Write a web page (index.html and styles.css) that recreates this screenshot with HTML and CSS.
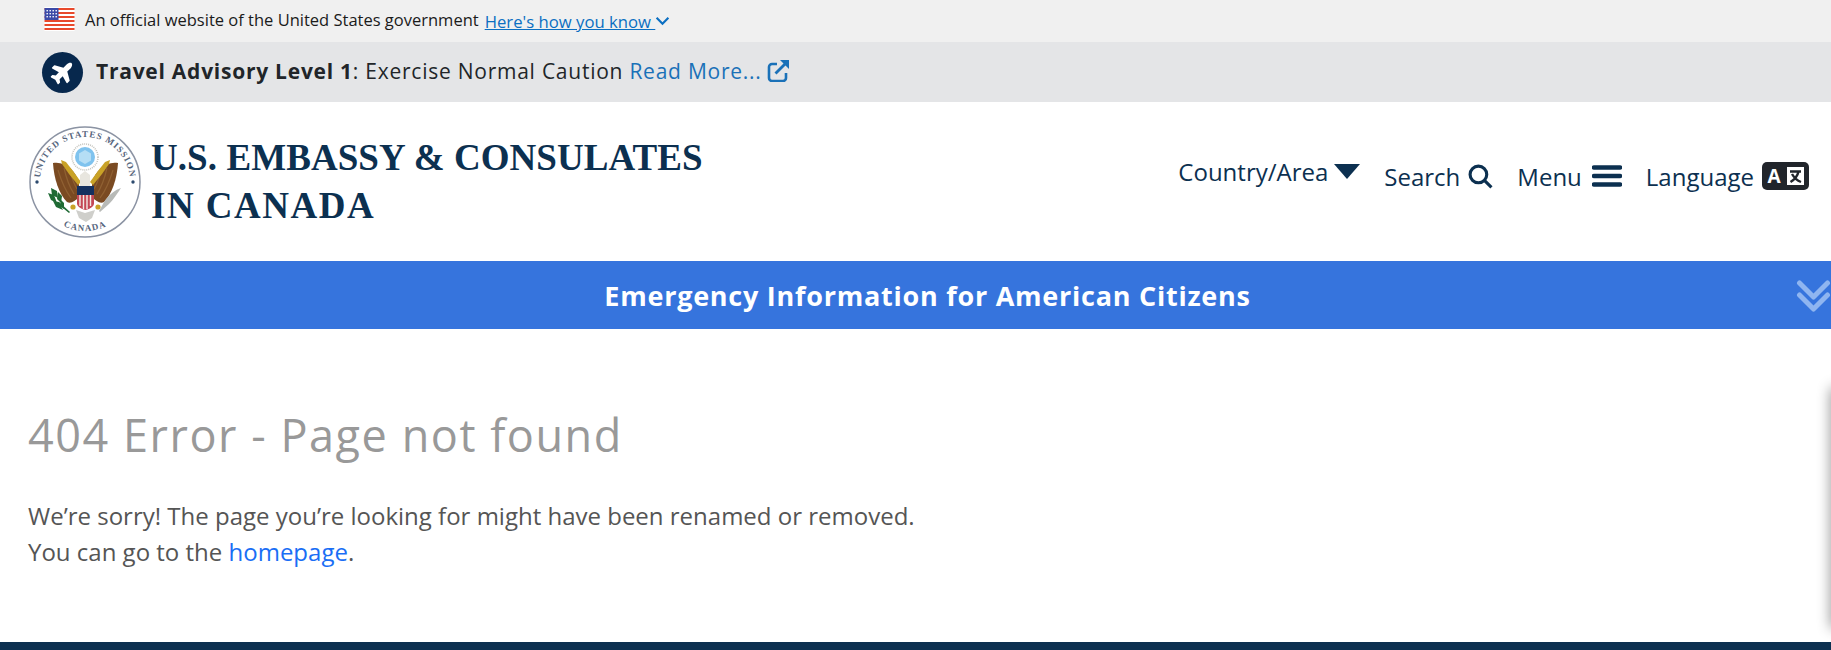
FILE: index.html
```html
<!DOCTYPE html>
<html lang="en">
<head>
<meta charset="utf-8">
<title>404 Error - Page not found</title>
<link rel="stylesheet" href="styles.css">
</head>
<body>
<div class="gov">
  <svg class="flag" viewBox="0 0 30 24" width="31" height="24">
    <rect width="30" height="24" fill="#fff"/>
    <g fill="#e8492c"><rect y="1" width="30" height="2"/><rect y="5" width="30" height="2"/><rect y="9" width="30" height="2"/><rect y="13" width="30" height="2"/><rect y="17" width="30" height="2"/><rect y="21" width="30" height="2"/></g>
    <rect y="1" width="14" height="12" fill="#3b4aa8"/>
    <g fill="#fff"><rect x="2" y="3" width="1.4" height="1.4"/><rect x="5" y="3" width="1.4" height="1.4"/><rect x="8" y="3" width="1.4" height="1.4"/><rect x="11" y="3" width="1.4" height="1.4"/><rect x="2" y="6" width="1.4" height="1.4"/><rect x="5" y="6" width="1.4" height="1.4"/><rect x="8" y="6" width="1.4" height="1.4"/><rect x="11" y="6" width="1.4" height="1.4"/><rect x="2" y="9" width="1.4" height="1.4"/><rect x="5" y="9" width="1.4" height="1.4"/><rect x="8" y="9" width="1.4" height="1.4"/><rect x="11" y="9" width="1.4" height="1.4"/></g>
  </svg>
  <span class="gov-text">An official website of the United States government</span>
  <a class="gov-link" href="#">Here's how you know </a>
  <svg class="gov-chev" viewBox="0 0 14 9" width="15" height="10"><path d="M1.5 1.5 7 7l5.5-5.5" fill="none" stroke="#0b6fc2" stroke-width="2"/></svg>
</div>
<div class="advisory">
  <span class="plane-badge">
    <svg viewBox="-40 -70 656 652" width="28" height="28"><g transform="rotate(-45 288 256)"><path fill="#fff" d="M480 192H365.710L260.610 8.060A16.014 16.014 0 0 0 246.710 0h-65.500c-10.630 0-18.300 10.170-15.380 20.390L214.860 192H112l-43.200-57.600c-3.020-4.030-7.770-6.400-12.800-6.400H16.010C5.600 128-2.040 137.780.49 147.880L32 256 .49 364.120C-2.040 374.220 5.600 384 16.010 384H56c5.040 0 9.780-2.370 12.800-6.400L112 320h102.860l-49.030 171.600c-2.920 10.220 4.750 20.400 15.380 20.400h65.500c5.740 0 11.040-3.080 13.890-8.060L365.710 320H480c35.350 0 96-28.650 96-64s-60.650-64-96-64z"/></g></svg>
  </span>
  <span class="adv-text"><strong>Travel Advisory Level 1</strong>: Exercise Normal Caution <a href="#">Read More...</a></span>
  <svg class="ext" viewBox="0 0 22 22" width="22" height="22"><path d="M10 4H5a3 3 0 0 0-3 3v11a3 3 0 0 0 3 3h11a3 3 0 0 0 3-3v-5" fill="none" stroke="#1a71b8" stroke-width="2.6"/><path d="M13 0h9v9z" fill="#1a71b8"/><path d="M18.500 3.500 8.500 13.500" fill="none" stroke="#1a71b8" stroke-width="2.8"/></svg>
</div>
<header class="masthead">
  <div class="brand">
    <svg class="seal" viewBox="0 0 112 112" width="112" height="112">
      <defs>
        <path id="arcTop" d="M11 56a45 45 0 0 1 90 0"/>
        <path id="arcBottom" d="M18 87a49 49 0 0 0 76 0"/>
        <g id="wing">
          <path d="M24 37C36 35 46 44 50 56v15c-4 4-8 7-12 5-8-8-13-23-14-39z" fill="#7a4a22"/>
          <path d="M29 44c3 10 7 20 13 28M35 42c2 9 5 18 10 26M41 46c2 6 4 12 7 17" fill="none" stroke="#8f6032" stroke-width="1.200"/>
          <path d="M32 34l5 2 7 9 8 11-3 3-9-11-7-10z" fill="#c9a227"/>
          <circle cx="44" cy="81" r="2.600" fill="#c9a227"/>
        </g>
      </defs>
      <circle cx="56" cy="56" r="55" fill="#fff" stroke="#8b93a3" stroke-width="1.500"/>
      <text class="seal-text"><textPath href="#arcTop" startOffset="50%" text-anchor="middle">UNITED STATES MISSION</textPath></text>
      <text class="seal-text"><textPath href="#arcBottom" startOffset="50%" text-anchor="middle">CANADA</textPath></text>
      <circle cx="8" cy="56" r="1.700" fill="#2c4a6e"/><circle cx="104" cy="56" r="1.700" fill="#2c4a6e"/>
      <circle cx="56" cy="31" r="13" fill="#fff" stroke="#c4c4be" stroke-width="1.600" stroke-dasharray="1 1"/>
      <circle cx="56" cy="31" r="10" fill="#7fc3ee"/>
      <path d="M56 24l6 3.500v7L56 38l-6-3.500v-7z" fill="#b5def5"/>
      <use href="#wing"/>
      <use href="#wing" transform="matrix(-1 0 0 1 113 0)"/>
      <path d="M51 49l5-4 5 4v11H51z" fill="#e8e6df"/>
      <path d="M48 60h17v9H48z" fill="#14305f"/>
      <path d="M48 69h17v9q-1 4-8.500 6-7.500-2-8.500-6z" fill="#c44855"/>
      <path d="M51 69v11M54.500 69v14M58 69v14M61.500 69v11" stroke="#f1ece6" stroke-width="1.400"/>
      <path d="M47 84l9 3 10-3-3 8-6 4-7-4z" fill="#cfcfcb"/>
      <g fill="#1f6a34"><path d="M22 62l6 3 1 7-6-3z"/><path d="M19 67l6 2 3 8-6-3z"/><path d="M29 66l4 4-1 7-4-4z"/><path d="M24 75l6 1 4 8-7-3z"/><path d="M32 74l3 3 0 6-4-3z"/><path d="M30 76l11 10-1 1-11-9z"/></g>
      <path d="M92 62c-4 6-8 12-12 16-3 3-6 5-9 8l-1-1c2-3 4-8 7-12 4-5 9-9 15-11z" fill="#b8bab7"/>
    </svg>
    <div class="brand-name"><span class="brand-line">U.S. EMBASSY &amp; CONSULATES</span><span class="brand-line brand-line-wide">IN CANADA</span></div>
  </div>
  <nav class="tools">
    <a class="tool tool-country" href="#">Country/Area <svg viewBox="0 0 26 15" width="26" height="15"><path d="M0 0h26L13 15z" fill="#0c3050"/></svg></a>
    <a class="tool" href="#">Search <svg viewBox="0 0 24 24" width="25" height="25"><circle cx="10" cy="10" r="8" fill="none" stroke="#0c3050" stroke-width="3"/><path d="M15.500 15.500 22.500 22.500" stroke="#0c3050" stroke-width="3"/></svg></a>
    <a class="tool tool-menu" href="#">Menu <svg viewBox="0 0 30 22" width="30" height="22"><path d="M2 2.500h26M2 11h26M2 19.500h26" stroke="#0c3050" stroke-width="4.400" stroke-linecap="round"/></svg></a>
    <a class="tool" href="#">Language <span class="lang-icon"><svg viewBox="0 0 47 28" width="47" height="28"><rect width="47" height="28" rx="5" fill="#21252b"/><text class="lang-a" x="12" y="20.500" text-anchor="middle">A</text><rect x="25" y="5" width="17" height="18" fill="#fff"/><path d="M28 9.500h11M36.500 9.500c-1 5-4 8-8 10.500M30 12c2 3.500 5 6.500 9 8" fill="none" stroke="#21252b" stroke-width="2.400"/></svg></span></a>
  </nav>
</header>
<a class="emergency" href="#">
  <span>Emergency Information for American Citizens</span>
  <svg class="double-chev" viewBox="0 0 36 34" width="36" height="34"><path d="M4.500 4 18.500 18 32.500 4M4.500 16 18.500 30 32.500 16" fill="none" stroke="#8fb5f0" stroke-width="5" stroke-linecap="round" stroke-linejoin="round"/></svg>
</a>
<main class="content">
  <h1>404 Error - Page not found</h1>
  <p>We’re sorry! The page you’re looking for might have been renamed or removed.<br>You can go to the <a href="#">homepage</a>.</p>
</main>
<div class="edge-shadow"></div>
<footer class="footer"></footer>
</body>
</html>
```
FILE: styles.css
```css
* { box-sizing: border-box; }
html, body { margin: 0; padding: 0; }
body {
  width: 1831px;
  height: 650px;
  overflow: hidden;
  position: relative;
  display: flex;
  flex-direction: column;
  background: #fff;
  font-family: "Open Sans", sans-serif;
  color: #212529;
}
a { text-decoration: none; }

.gov {
  height: 42px;
  flex: none;
  background: #f0f0f0;
  display: flex;
  align-items: center;
  padding-left: 44px;
  font-size: 16.5px;
}
.flag { flex: none; margin-top: -4px; }
.gov-text { margin-left: 10px; color: #1b1b1b; margin-top: -3px; }
.gov-link { margin-left: 6px; color: #0b6fc2; text-decoration: underline; font-size: 16.7px; white-space: pre; }
.gov-chev { margin-left: 0; }

.advisory {
  height: 60px;
  flex: none;
  background: #e4e5e7;
  display: flex;
  align-items: center;
  padding-left: 42px;
  font-size: 21px;
  letter-spacing: 0.75px;
}
.plane-badge {
  width: 41px;
  height: 41px;
  border-radius: 50%;
  background: #07284d;
  display: flex;
  align-items: center;
  justify-content: center;
}
.adv-text { margin: -2px 0 0 13px; color: #212529; }
.adv-text a { color: #1a71b8; }
.ext { margin: -2px 0 0 5px; }

.masthead {
  height: 159px;
  flex: none;
  display: flex;
  justify-content: space-between;
  align-items: center;
  padding: 0 22px 0 29px;
}
.brand { display: flex; align-items: center; gap: 10px; }
.seal-text { font-family: "Liberation Serif", serif; font-size: 9px; letter-spacing: 1px; fill: #56657c; font-weight: 700; }
.brand-name {
  font-family: "Liberation Serif", serif;
  font-weight: 700;
  font-size: 37px;
  line-height: 48px;
  color: #0c3050;
  white-space: nowrap;
  display: flex;
  flex-direction: column;
}
.brand-line { letter-spacing: 0.07px; }
.brand-line-wide { letter-spacing: 1.5px; }
.tools { display: flex; align-items: center; gap: 24px; margin-top: -16px; }
.tool {
  display: flex;
  align-items: center;
  gap: 8px;
  color: #0c3050;
  font-size: 24px;
  margin-top: 5px;
}
.tool-country { margin-top: 0; margin-bottom: 4px; gap: 6px; }
.tool-menu { gap: 10px; }
.lang-icon { display: flex; }
.lang-a { font-family: "Open Sans", sans-serif; font-size: 19px; font-weight: 700; fill: #fff; }

.emergency {
  height: 68px;
  flex: none;
  background: #3674dd;
  display: flex;
  align-items: center;
  justify-content: center;
  padding-left: 24px;
  position: relative;
  color: #fff;
  font-weight: 700;
  font-size: 27px;
  letter-spacing: 0.75px;
}
.double-chev { position: absolute; right: 0; top: 18px; }

.content { flex: 1; padding: 0 28px; color: #555; }
.content h1 {
  margin: 76px 0 0;
  font-weight: 400;
  font-size: 45px;
  line-height: 60px;
  letter-spacing: 1.54px;
  color: #999;
}
.content p {
  margin: 33px 0 0;
  font-size: 24px;
  line-height: 36px;
}
.content a { color: #1a6ef5; }
.edge-shadow {
  position: absolute;
  right: -12px;
  top: 388px;
  width: 12px;
  height: 240px;
  box-shadow: 0 0 14px rgba(0,0,0,.45);
}
.footer { height: 8px; flex: none; background: #0c3050; }
```
